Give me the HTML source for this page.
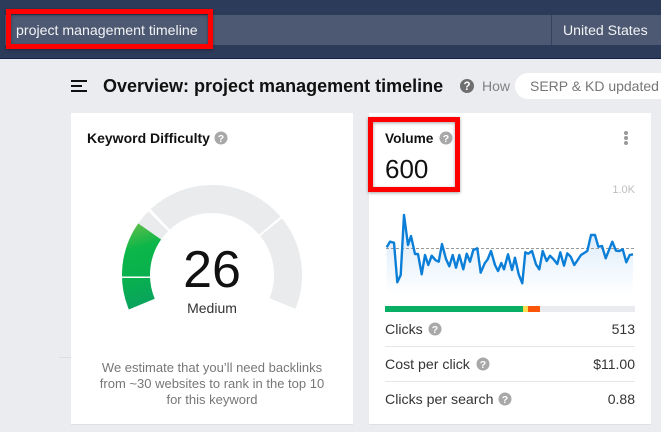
<!DOCTYPE html>
<html lang="en">
<head>
<meta charset="utf-8">
<title>Overview: project management timeline</title>
<style>
html,body{margin:0;padding:0;width:661px;height:432px;overflow:hidden;background:#ebecef}
svg{display:block;position:absolute;left:0;top:0}
text{font-family:"Liberation Sans",Arial,sans-serif;white-space:pre}
.q{fill:#fff;font-weight:700;font-size:10.5px;text-anchor:middle}
.row{font-size:14.15px;fill:#333}
.val{font-size:14px;fill:#333;text-anchor:end}
.note{font-size:13px;fill:#777;text-anchor:middle}
</style>
</head>
<body>
<svg width="661" height="432" viewBox="0 0 661 432" xmlns="http://www.w3.org/2000/svg">
<defs>
<linearGradient id="g" gradientUnits="userSpaceOnUse" x1="125" y1="222" x2="150" y2="312">
<stop offset="0" stop-color="#6cc04a"/><stop offset=".3" stop-color="#0db649"/><stop offset=".6" stop-color="#08b14d"/><stop offset="1" stop-color="#0a9f63"/>
</linearGradient>
<linearGradient id="a" x1="0" y1="0" x2="0" y2="1">
<stop offset="0" stop-color="#d3e6f9"/><stop offset="1" stop-color="#ffffff"/>
</linearGradient>
<filter id="s" x="-10%" y="-20%" width="120%" height="140%"><feDropShadow dx="0" dy="1" stdDeviation="1.5" flood-color="#000" flood-opacity=".35"/></filter>
</defs>

<!-- header -->
<rect width="661" height="58" fill="#2d3b5a"/>
<rect y="58" width="661" height="1" fill="#141f48"/>
<rect x="5" y="15" width="656" height="30" fill="#4d5972"/>
<rect x="551" y="15" width="1" height="30" fill="#35425f"/>
<text x="16" y="35" font-size="14.15" fill="#f2f3f5">project management timeline</text>
<text x="563" y="35" font-size="14.1" fill="#f2f3f5">United States</text>

<!-- overview row -->
<rect x="71" y="80" width="16" height="2" fill="#111"/>
<rect x="71" y="85" width="11" height="2" fill="#111"/>
<rect x="71" y="90" width="16" height="2" fill="#111"/>
<text x="103" y="92" font-size="18" font-weight="700" fill="#111">Overview: project management timeline</text>
<circle cx="467" cy="86" r="7" fill="#6f6f6f"/>
<text class="q" x="467" y="90" style="font-size:11.5px">?</text>
<text x="482" y="91" font-size="14" fill="#808080">How</text>
<rect x="515" y="73" width="170" height="26" rx="13" fill="#fff"/>
<text x="530" y="91" font-size="14" fill="#777">SERP &amp; KD updated</text>

<rect x="59" y="357" width="12" height="1" fill="#dcdde0"/>

<!-- left card -->
<rect x="71" y="113" width="282" height="311" fill="#fff"/>
<rect x="71" y="424" width="282" height="1" fill="#dfe0e3"/>
<text x="87" y="143" font-size="14" font-weight="700" fill="#111">Keyword Difficulty</text>
<circle cx="221" cy="138" r="6.5" fill="#a8a8a8"/>
<text class="q" x="221" y="142">?</text>

<g fill="none" stroke-width="28">
<path d="M141.800 304.100A76 76 0 0 1 149.700 231.400" stroke="url(#g)"/>
<path d="M149.700 231.400A76 76 0 0 1 158.300 221.300" stroke="#e9ebed"/>
<path d="M160.200 219.400A76 76 0 0 1 269.800 225.600" stroke="#e9ebed"/>
<path d="M271.100 227.200A76 76 0 0 1 282.500 303.500" stroke="#e9ebed"/>
</g>
<rect x="118" y="276.500" width="36" height="1.500" fill="#fff"/>
<text x="212" y="287" font-size="52" fill="#111" text-anchor="middle">26</text>
<text x="212" y="313" font-size="14" fill="#333" text-anchor="middle">Medium</text>
<text class="note" x="212" y="372">We estimate that you’ll need backlinks</text>
<text class="note" x="212" y="388">from ~30 websites to rank in the top 10</text>
<text class="note" x="212" y="404">for this keyword</text>

<!-- right card -->
<rect x="369" y="113" width="282" height="311" fill="#fff"/>
<rect x="369" y="424" width="282" height="1" fill="#dfe0e3"/>
<text x="385" y="143" font-size="13.700" font-weight="700" fill="#111">Volume</text>
<circle cx="446" cy="138" r="6.500" fill="#a8a8a8"/>
<text class="q" x="446" y="142">?</text>
<text x="385" y="178" font-size="26" fill="#111">600</text>
<circle cx="626" cy="133" r="2" fill="#999"/>
<circle cx="626" cy="138" r="2" fill="#999"/>
<circle cx="626" cy="143" r="2" fill="#999"/>
<text x="635" y="193" font-size="11" fill="#bdbdbd" text-anchor="end">1.0K</text>

<!-- chart -->
<path fill="url(#a)" d="M386.700 247.300L390 241.700L394 242.700L397.300 282.300L400.700 275L404 215L408 245L411 236L415 254L418 254L421.700 274.300L425 255L428.300 265L431.700 255.700L435.700 260.300L438.700 261.700L442 244L446 259L449.300 266.300L452.700 255L456 267.700L459.300 255L463.300 269.300L466.700 253.700L470 261.700L473.300 250L477.300 248.300L480.700 272.700L484.700 263.300L487.700 259.300L491 251L495 265L498 271L501.300 263L504 269.300L508 254.300L512 270L515 257.700L518.700 274.300L522.300 283.300L525.300 252.300L528.300 253.700L532 251L536 264.300L539.300 269.300L542.700 251L546.700 261L550 255.700L553.300 259L557.300 264L560.300 252.300L564 265.700L567.300 253.300L570.700 256.700L574.300 265L581 255L587.300 251L591 235L595 235L598.300 246.700L602 246L605.700 258.300L612.300 241.700L616 250.700L619.300 251L622.700 249.300L626.300 262.300L629.700 255L633 254.300L633 295L386.700 295Z"/>
<line x1="386" y1="248.500" x2="635" y2="248.500" stroke="#999" stroke-width="1" stroke-dasharray="3 2"/>
<path fill="none" stroke="#0b7fd8" stroke-width="2.400" stroke-linejoin="round" d="M386.700 247.300L390 241.700L394 242.700L397.300 282.300L400.700 275L404 215L408 245L411 236L415 254L418 254L421.700 274.300L425 255L428.300 265L431.700 255.700L435.700 260.300L438.700 261.700L442 244L446 259L449.300 266.300L452.700 255L456 267.700L459.300 255L463.300 269.300L466.700 253.700L470 261.700L473.300 250L477.300 248.300L480.700 272.700L484.700 263.300L487.700 259.300L491 251L495 265L498 271L501.300 263L504 269.300L508 254.300L512 270L515 257.700L518.700 274.300L522.300 283.300L525.300 252.300L528.300 253.700L532 251L536 264.300L539.300 269.300L542.700 251L546.700 261L550 255.700L553.300 259L557.300 264L560.300 252.300L564 265.700L567.300 253.300L570.700 256.700L574.300 265L581 255L587.300 251L591 235L595 235L598.300 246.700L602 246L605.700 258.300L612.300 241.700L616 250.700L619.300 251L622.700 249.300L626.300 262.300L629.700 255L633 254.300"/>

<!-- bar -->
<rect x="385" y="306" width="250" height="6" fill="#e9ebee"/>
<rect x="385" y="306" width="138" height="6" fill="#08ae63"/>
<rect x="523" y="306" width="5" height="6" fill="#fedc4f"/>
<rect x="528" y="306" width="12" height="6" fill="#fb5607"/>

<!-- rows -->
<text class="row" x="385" y="334">Clicks</text>
<circle cx="435" cy="329" r="6.500" fill="#a8a8a8"/>
<text class="q" x="435" y="333">?</text>
<text class="val" x="635" y="334">513</text>
<rect x="385" y="346" width="250" height="1" fill="#e6e7e9"/>
<text class="row" x="385" y="369">Cost per click</text>
<circle cx="483" cy="364" r="6.500" fill="#a8a8a8"/>
<text class="q" x="483" y="368">?</text>
<text class="val" x="635" y="369">$11.00</text>
<rect x="385" y="381" width="250" height="1" fill="#e6e7e9"/>
<text class="row" x="385" y="404">Clicks per search</text>
<circle cx="505" cy="399" r="6.500" fill="#a8a8a8"/>
<text class="q" x="505" y="403">?</text>
<text class="val" x="635" y="404">0.88</text>

<!-- red highlight boxes -->
<rect x="8.500" y="11.500" width="202" height="35" fill="none" stroke="#fe0000" stroke-width="5" filter="url(#s)"/>
<rect x="370.500" y="119.500" width="87" height="70" fill="none" stroke="#fe0000" stroke-width="5" filter="url(#s)"/>
</svg>
</body>
</html>
